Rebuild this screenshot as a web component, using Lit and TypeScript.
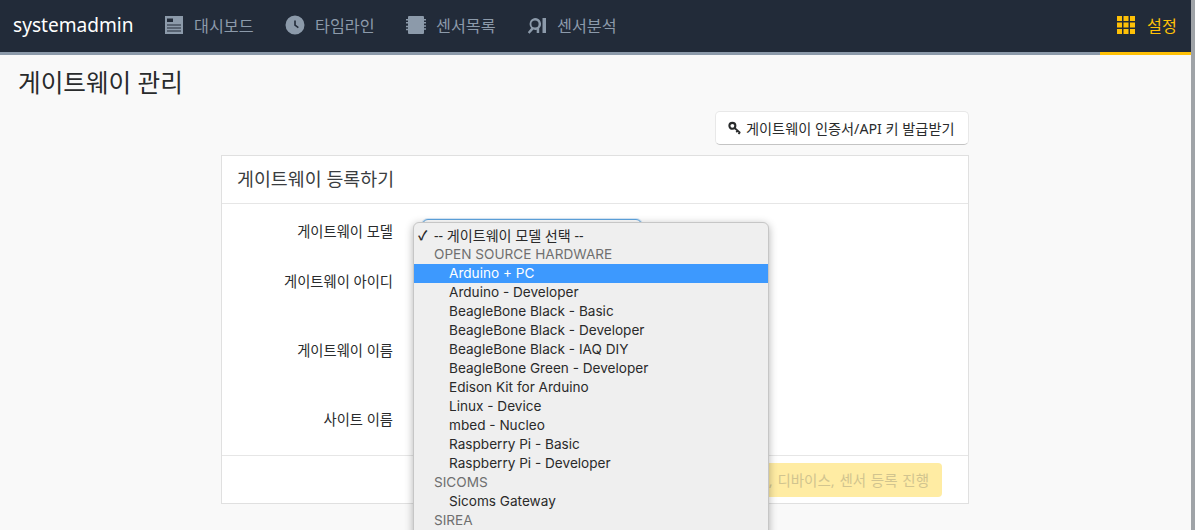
import { LitElement, html, css, svg } from "lit";
import { customElement } from "lit/decorators.js";

const navItems = [
  {
    label: "대시보드",
    icon: svg`<path fill-rule="evenodd" d="M1 1h18v18H1zM3 3.500V7H9V3.500zM3 9.500v1h14v-1zM3 12.500v1h14v-1zM3 15.500v1h14v-1z"/>`,
  },
  {
    label: "타임라인",
    icon: svg`<path fill-rule="evenodd" d="M10 0.500a9.500 9.500 0 1 0 0 19a9.500 9.500 0 0 0 0-19zM9.200 5.500h1.600v4.200l3 2.200l-.9 1.300l-3.700-2.700z"/>`,
  },
  {
    label: "센서목록",
    icon: svg`<path d="M3 1h14a1 1 0 0 1 1 1v2h2v1.500h-2V7h2v1.500h-2v1.700h2v1.500h-2v1.600h2v1.500h-2V18a1 1 0 0 1-1 1H3a1 1 0 0 1-1-1v-2.700H0v-1.500h2v-1.600H0v-1.500h2V8.500H0V7h2V5.500H0V4h2V2a1 1 0 0 1 1-1z"/>`,
  },
  {
    label: "센서분석",
    icon: svg`<path fill-rule="evenodd" d="M8 3a6 6 0 0 1 4.200 10.300V18H9.700v-3.300a6 6 0 0 1-3.300-.1L2.500 18.800L0.800 17.200L4.200 13A6 6 0 0 1 8 3zM8 5.400a3.600 3.600 0 1 0 0 7.200a3.600 3.600 0 0 0 0-7.200zM15.500 3H19v15h-3.500z"/>`,
  },
];

const optionGroups = [
  {
    name: "OPEN SOURCE HARDWARE",
    options: [
      "Arduino + PC",
      "Arduino - Developer",
      "BeagleBone Black - Basic",
      "BeagleBone Black - Developer",
      "BeagleBone Black - IAQ DIY",
      "BeagleBone Green - Developer",
      "Edison Kit for Arduino",
      "Linux - Device",
      "mbed - Nucleo",
      "Raspberry Pi - Basic",
      "Raspberry Pi - Developer",
    ],
  },
  { name: "SICOMS", options: ["Sicoms Gateway"] },
  { name: "SIREA", options: [] as string[] },
];

const fields = [
  { label: "게이트웨이 모델", cls: "first" },
  { label: "게이트웨이 아이디", cls: "second" },
  { label: "게이트웨이 이름", cls: "third" },
  { label: "사이트 이름", cls: "third" },
];

@customElement("app-root")
export class AppRoot extends LitElement {
  static styles = css`
    :host {
      display: block;
      height: 530px;
      overflow: hidden;
      font-family: "Noto Sans", "Noto Sans CJK KR", sans-serif;
      color: #292b2c;
      background: #9fa3a7;
    }
    .page {
      position: relative;
      width: 1191px;
      height: 530px;
      background: #f9f9f9;
    }
    nav {
      display: flex;
      height: 52px;
      align-items: stretch;
      background: #222b39;
      border-bottom: 3px solid #8c9aaa;
    }
    .brand {
      width: 120px;
      padding: 0 31px 3px 13px;
      align-self: center;
      color: #fff;
      font-size: 19.100px;
      white-space: nowrap;
    }
    .nav-item {
      display: flex;
      align-items: center;
      gap: 10px;
      width: 90px;
      margin-right: 31px;
      padding-bottom: 3px;
      color: #8c9aaa;
      font-size: 16.200px;
      white-space: nowrap;
    }
    .nav-item svg {
      width: 20px;
      height: 20px;
      flex: none;
      fill: currentColor;
    }
    .settings {
      display: flex;
      align-items: center;
      gap: 12px;
      width: 91px;
      box-sizing: border-box;
      height: 55px;
      margin-left: auto;
      padding: 0 0 3px 17px;
      border-bottom: 3px solid #ffc107;
      color: #ffc107;
      font-size: 16.200px;
    }
    .settings svg {
      width: 18px;
      height: 18px;
      fill: currentColor;
    }
    h1 {
      margin: 0;
      padding: 11px 0 0 18px;
      height: 44px;
      box-sizing: border-box;
      font-size: 24.600px;
      line-height: 34px;
      font-weight: 400;
      color: #292b2c;
    }
    .actions {
      display: flex;
      justify-content: flex-end;
      width: 969px;
      margin: 12px 0 10px;
    }
    .key-btn {
      display: flex;
      align-items: center;
      gap: 4px;
      width: 254px;
      height: 34px;
      box-sizing: border-box;
      padding: 0 0 0 12px;
      background: #fff;
      border: 1px solid #e8e8e8;
      border-bottom-color: #c4c4c4;
      border-radius: 5px;
      font: inherit;
      font-size: 14.200px;
      color: #292b2c;
      white-space: nowrap;
    }
    .key-btn svg {
      width: 14px;
      height: 14px;
      flex: none;
    }
    .key-btn circle,
    .key-btn path {
      fill: none;
      stroke: #292b2c;
    }
    .card {
      width: 748px;
      height: 349px;
      box-sizing: border-box;
      margin-left: 221px;
      display: flex;
      flex-direction: column;
      background: #fff;
      border: 1px solid #e0e0e0;
    }
    .card-head {
      height: 48px;
      box-sizing: border-box;
      padding: 0 15px 4px;
      display: flex;
      align-items: center;
      border-bottom: 1px solid #e6e6e6;
      font-size: 18.400px;
      color: #3a3d40;
    }
    .card-body {
      flex: 1;
      padding-top: 14px;
    }
    .field {
      display: flex;
      align-items: center;
      height: 24px;
    }
    .field.second {
      margin-top: 26px;
    }
    .field.third {
      margin-top: 45px;
    }
    .field label {
      width: 171px;
      text-align: right;
      font-size: 14.300px;
      white-space: nowrap;
    }
    .control {
      width: 220px;
      height: 22px;
      flex: none;
      box-sizing: border-box;
      margin-left: 29px;
      border: 1px solid #d5d5d5;
      border-radius: 6px;
      background: #fff;
    }
    .field.first .control {
      border-color: #5ea5e0;
      box-shadow: 0 0 0 1px rgba(94, 165, 224, 0.25);
    }
    .card-foot {
      height: 48px;
      box-sizing: border-box;
      display: flex;
      align-items: center;
      justify-content: flex-end;
      padding-right: 13px;
      border-top: 1px solid #e6e6e6;
    }
    .next {
      display: flex;
      align-items: center;
      height: 34px;
      padding: 0 13px;
      margin-right: 13px;
      border-radius: 4px;
      background: #ffeca3;
      color: #d1c48f;
      font-size: 14.500px;
      word-spacing: 1px;
      white-space: nowrap;
    }
    .menu {
      position: absolute;
      left: 413px;
      top: 222px;
      width: 356px;
      height: 330px;
      box-sizing: border-box;
      padding-top: 3px;
      background: #efefef;
      border: 1px solid #c6c6c6;
      border-radius: 6px;
      box-shadow: 0 2px 9px rgba(0, 0, 0, 0.3);
      font-family: Inter, "Noto Sans CJK KR", sans-serif;
      font-size: 13.600px;
      line-height: 19px;
      color: #2a2a2a;
    }
    .row {
      height: 19px;
      white-space: nowrap;
    }
    .placeholder {
      position: relative;
      padding-left: 20px;
      font-family: "Noto Sans", "Noto Sans CJK KR", sans-serif;
      font-size: 14.100px;
    }
    .check {
      position: absolute;
      left: 4px;
      top: 0;
      font-size: 13px;
      font-weight: 700;
    }
    .group {
      padding-left: 20px;
      color: #6f6f6f;
    }
    .option {
      padding-left: 35px;
    }
    .option.active {
      background: #3d99fe;
      color: #fff;
    }
  `;

  render() {
    return html`
      <div class="page">
        <nav>
          <span class="brand">systemadmin</span>
          ${navItems.map(
            (item) => html`
              <span class="nav-item">
                <svg viewBox="0 0 20 20">${item.icon}</svg>
                ${item.label}
              </span>
            `
          )}
          <span class="settings">
            <svg viewBox="0 0 18 18">
              <path
                d="M0 0h5v5H0zM6.500 0h5v5h-5zM13 0h5v5h-5zM0 6.500h5v5H0zM6.500 6.500h5v5h-5zM13 6.500h5v5h-5zM0 13h5v5H0zM6.500 13h5v5h-5zM13 13h5v5h-5z"
              />
            </svg>
            설정
          </span>
        </nav>
        <h1>게이트웨이 관리</h1>
        <div class="actions">
          <button class="key-btn">
            <svg viewBox="0 0 16 16">
              <circle cx="5" cy="5.500" r="3.400" stroke-width="2.400" />
              <path d="M7.500 8l6.500 5.500M11 11l-1.500 1.800M13.500 13l-1.500 1.800" stroke-width="2" />
            </svg>
            게이트웨이 인증서/API 키 발급받기
          </button>
        </div>
        <section class="card">
          <div class="card-head">게이트웨이 등록하기</div>
          <div class="card-body">
            ${fields.map(
              (f) => html`
                <div class="field ${f.cls}">
                  <label>${f.label}</label>
                  <div class="control"></div>
                </div>
              `
            )}
          </div>
          <div class="card-foot">
            <div class="next">게이트웨이, 디바이스, 센서 등록 진행</div>
          </div>
        </section>
        <div class="menu">
          <div class="row placeholder">
            <span class="check">✓</span>-- 게이트웨이 모델 선택 --
          </div>
          ${optionGroups.map(
            (g) => html`
              <div class="row group">${g.name}</div>
              ${g.options.map(
                (o, i) => html`
                  <div class="row option ${g.options.length > 1 && i === 0 ? "active" : ""}">
                    ${o}
                  </div>
                `
              )}
            `
          )}
        </div>
      </div>
    `;
  }
}
